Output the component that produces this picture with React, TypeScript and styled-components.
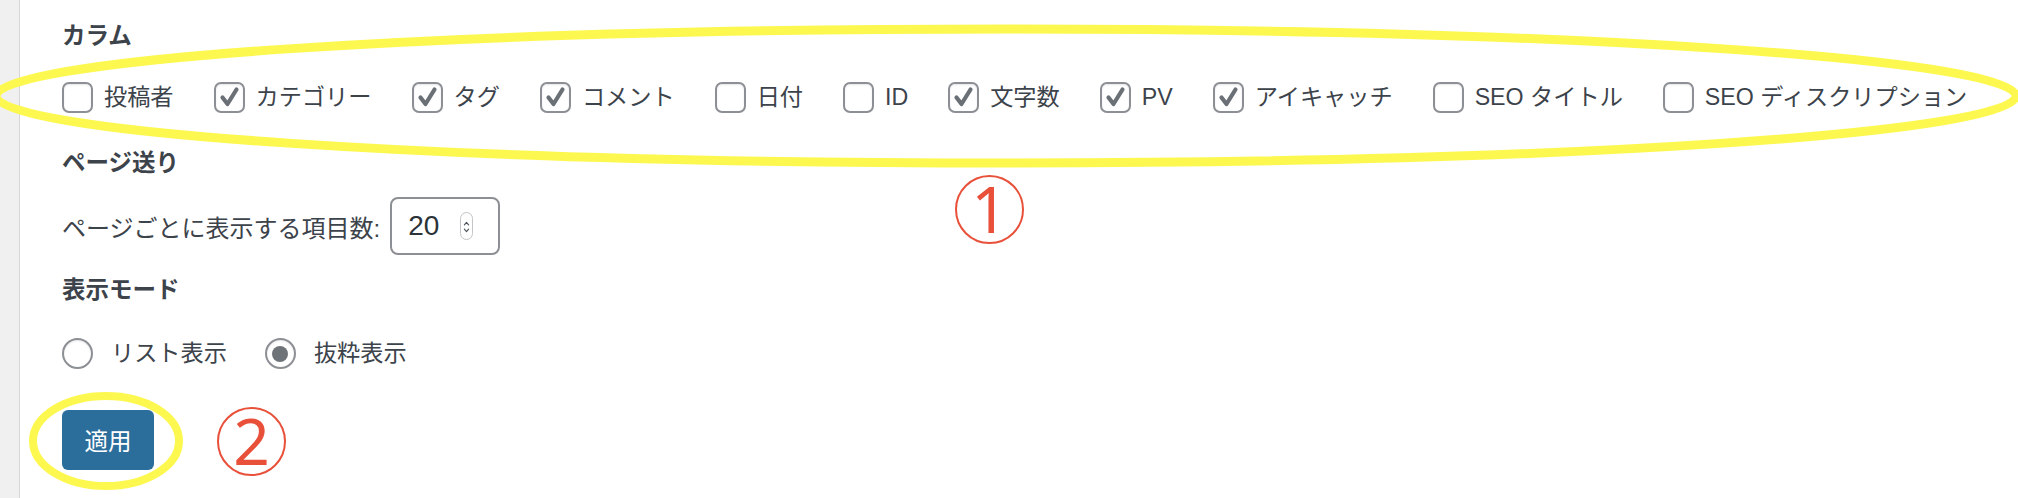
import styled, { createGlobalStyle } from "styled-components";

const columns = [
  { label: "投稿者", checked: false },
  { label: "カテゴリー", checked: true },
  { label: "タグ", checked: true },
  { label: "コメント", checked: true },
  { label: "日付", checked: false },
  { label: "ID", checked: false },
  { label: "文字数", checked: true },
  { label: "PV", checked: true },
  { label: "アイキャッチ", checked: true },
  { label: "SEO タイトル", checked: false },
  { label: "SEO ディスクリプション", checked: false },
];

const modes = [
  { label: "リスト表示", checked: false },
  { label: "抜粋表示", checked: true },
];

const App = () => {
  return (
    <Page>
      <GlobalStyle />
      <Sidebar />
      <Content>
        <Legend $top={0}>カラム</Legend>
        <CheckRow>
          {columns.map((c) => (
            <CheckLabel key={c.label}>
              <CheckBox>
                {c.checked && (
                  <svg viewBox="0 0 27 27" width="27" height="27">
                    <path
                      d="M6.5 13.5 L11.5 20 L20.5 5.5"
                      fill="none"
                      stroke="currentColor"
                      strokeWidth="4.2"
                      strokeLinecap="round"
                      strokeLinejoin="round"
                    />
                  </svg>
                )}
              </CheckBox>
              {c.label}
            </CheckLabel>
          ))}
        </CheckRow>

        <Legend $top={34}>ページ送り</Legend>
        <PerPageRow>
          <PerPageText>ページごとに表示する項目数:</PerPageText>
          <NumberField>
            <NumberValue>20</NumberValue>
            <Spinner>
              <svg viewBox="0 0 13 28" width="13" height="28">
                <path
                  d="M4 11.5 L6.5 8.5 L9 11.5"
                  fill="none"
                  stroke="currentColor"
                  strokeWidth="1.4"
                  strokeLinecap="round"
                  strokeLinejoin="round"
                />
                <path
                  d="M4 16.5 L6.5 19.5 L9 16.5"
                  fill="none"
                  stroke="currentColor"
                  strokeWidth="1.4"
                  strokeLinecap="round"
                  strokeLinejoin="round"
                />
              </svg>
            </Spinner>
          </NumberField>
        </PerPageRow>

        <Legend $top={19}>表示モード</Legend>
        <RadioRow>
          {modes.map((m) => (
            <RadioLabel key={m.label}>
              <Radio>{m.checked && <RadioDot />}</Radio>
              {m.label}
            </RadioLabel>
          ))}
        </RadioRow>

        <ApplyButton>適用</ApplyButton>
      </Content>

      <Marks viewBox="0 0 2018 498" width="2018" height="498">
        <ellipse
          cx="1006"
          cy="96"
          rx="1010"
          ry="67"
          fill="none"
          stroke="#fdf850"
          strokeWidth="9"
        />
        <ellipse
          cx="106"
          cy="441"
          rx="73"
          ry="45"
          fill="none"
          stroke="#fdf850"
          strokeWidth="8"
        />
      </Marks>
      <Badge $x={955} $y={175}>1</Badge>
      <Badge $x={217} $y={407}>2</Badge>
    </Page>
  );
};

export default App;

const GlobalStyle = createGlobalStyle`
  body {
    margin: 0;
    background: #ffffff;
    font-family: "Liberation Sans", "Noto Sans CJK JP", sans-serif;
    color: #3c434a;
  }
`;

const Page = styled.div`
  position: relative;
  display: flex;
  width: 2018px;
  height: 498px;
  overflow: hidden;
  background: #ffffff;
`;

const Sidebar = styled.div`
  width: 19px;
  flex-shrink: 0;
  background: #f0f0f1;
  border-right: 1px solid #d5d6d8;
`;

const Content = styled.div`
  flex: 1;
  display: flex;
  flex-direction: column;
  align-items: flex-start;
  padding: 20px 0 0 42px;
  font-size: 23.2px;
`;

const Legend = styled.div<{ $top: number }>`
  margin-top: ${(p) => p.$top}px;
  font-size: 23.5px;
  font-weight: 700;
  line-height: 32px;
  color: #3c434a;
`;

const CheckRow = styled.div`
  display: flex;
  align-items: center;
  margin-top: 30px;
  height: 31px;
`;

const CheckLabel = styled.label`
  display: flex;
  align-items: center;
  gap: 11px;
  margin-right: 40px;
  line-height: 31px;
  white-space: nowrap;
`;

const CheckBox = styled.span`
  box-sizing: border-box;
  width: 31px;
  height: 31px;
  border: 2px solid #8c8f94;
  border-radius: 7px;
  background: #ffffff;
  display: flex;
  align-items: center;
  justify-content: center;
  color: #6b7077;
  box-shadow: inset 0 1px 2px rgba(0, 0, 0, 0.1);
`;

const PerPageRow = styled.div`
  display: flex;
  align-items: center;
  gap: 10px;
  margin-top: 18px;
`;

const PerPageText = styled.span`
  font-size: 24px;
  white-space: nowrap;
`;

const NumberField = styled.div`
  box-sizing: border-box;
  width: 110px;
  height: 58px;
  border: 2px solid #8c8f94;
  border-radius: 8px;
  display: flex;
  align-items: center;
  justify-content: space-between;
  padding: 0 25px 0 16px;
  color: #2c3338;
`;

const NumberValue = styled.span`
  font-size: 28px;
  line-height: 1;
`;

const Spinner = styled.span`
  box-sizing: border-box;
  width: 13px;
  height: 28px;
  border: 1px solid #c3c4c7;
  border-radius: 7px;
  display: flex;
  color: #50575e;
`;

const RadioRow = styled.div`
  display: flex;
  align-items: center;
  gap: 38px;
  margin-top: 32px;
  height: 31px;
`;

const RadioLabel = styled.label`
  display: flex;
  align-items: center;
  gap: 18px;
  line-height: 31px;
  white-space: nowrap;
`;

const Radio = styled.span`
  box-sizing: border-box;
  width: 31px;
  height: 31px;
  border: 2px solid #8c8f94;
  border-radius: 50%;
  display: flex;
  align-items: center;
  justify-content: center;
  box-shadow: inset 0 1px 2px rgba(0, 0, 0, 0.1);
`;

const RadioDot = styled.span`
  width: 16px;
  height: 16px;
  border-radius: 50%;
  background: #6e737a;
`;

const ApplyButton = styled.button`
  margin-top: 41px;
  width: 92px;
  height: 60px;
  border: none;
  border-radius: 6px;
  background: #2c6e9b;
  color: #ffffff;
  font-family: "Liberation Sans", "Noto Sans CJK JP", sans-serif;
  font-size: 23.5px;
  padding: 0;
  cursor: pointer;
`;

const Marks = styled.svg`
  position: absolute;
  left: 0;
  top: 0;
  pointer-events: none;
`;

const Badge = styled.span<{ $x: number; $y: number }>`
  position: absolute;
  left: ${(p) => p.$x}px;
  top: ${(p) => p.$y}px;
  box-sizing: border-box;
  width: 69px;
  height: 69px;
  border: 2.5px solid #e8503a;
  border-radius: 50%;
  display: flex;
  align-items: center;
  justify-content: center;
  color: #e8503a;
  font-family: "Noto Sans", sans-serif;
  font-size: 64px;
  line-height: 1;
  padding-bottom: 2px;
`;
